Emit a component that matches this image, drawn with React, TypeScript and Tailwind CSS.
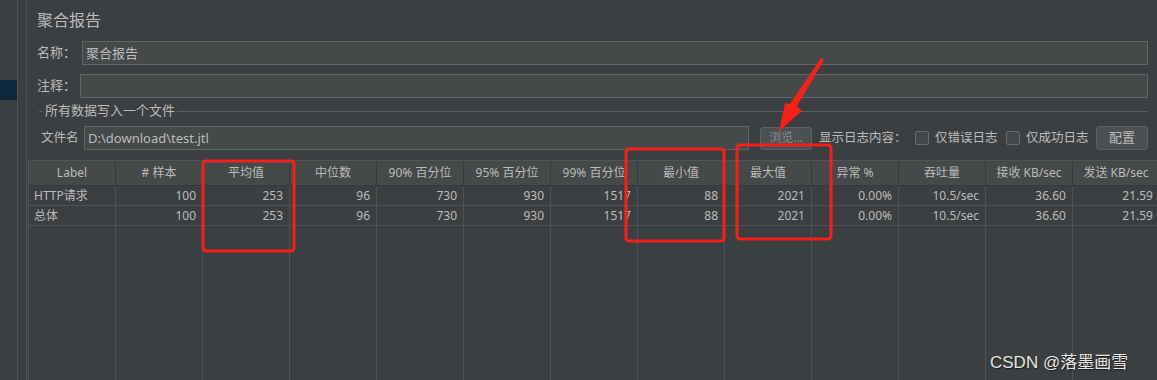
import React from "react";

const FONT = "font-['Noto_Sans','Noto_Sans_CJK_SC',sans-serif]";

const COLUMNS = [
  "Label",
  "# 样本",
  "平均值",
  "中位数",
  "90% 百分位",
  "95% 百分位",
  "99% 百分位",
  "最小值",
  "最大值",
  "异常 %",
  "吞吐量",
  "接收 KB/sec",
  "发送 KB/sec",
];

const ROWS = [
  ["HTTP请求", "100", "253", "96", "730", "930", "1517", "88", "2021", "0.00%", "10.5/sec", "36.60", "21.59"],
  ["总体", "100", "253", "96", "730", "930", "1517", "88", "2021", "0.00%", "10.5/sec", "36.60", "21.59"],
];

function Checkbox({ label }: { label: string }) {
  return (
    <div className="flex items-center gap-[6px] shrink-0 whitespace-nowrap">
      <div className="w-[14px] h-[14px] rounded-[2px] border border-[#6b6b6b] bg-[#43494a]" />
      <span>{label}</span>
    </div>
  );
}

function Annotations() {
  // red boxes and arrow drawn over the screenshot
  return (
    <svg className="absolute left-0 top-0 pointer-events-none" width="1157" height="380">
      <rect x="203" y="161" width="91" height="90" rx="3" fill="none" stroke="#f52018" strokeWidth="3" />
      <rect x="626" y="149" width="98" height="92" rx="3" fill="none" stroke="#f52018" strokeWidth="3" />
      <rect x="737" y="145" width="94" height="94" rx="3" fill="none" stroke="#f52018" strokeWidth="3" />
      <polygon
        points="821,58 824,60 797,106 802,111 779,131 785,103 790,104"
        fill="#f52018"
      />
    </svg>
  );
}

export default function App() {
  return (
    <div className={`relative w-[1157px] h-[380px] overflow-hidden bg-[#3c3f41] text-[#bbbbbb] ${FONT} flex`}>
      {/* left tree strip */}
      <div className="w-[18px] shrink-0 border-r border-[#505354] flex flex-col">
        <div className="h-[80px]" />
        <div className="h-[20px] bg-[#0d293e]" />
      </div>
      <div className="w-[9px] shrink-0 border-r border-[#505354]" />

      {/* main panel */}
      <div className="flex-1 flex flex-col min-w-0">
        <div className="pl-[10px] pr-[9px]">
          <div className="mt-[8px] h-[24px] text-[16px] leading-[24px]">聚合报告</div>

          <div className="mt-[9px] flex items-center h-[24px] text-[13px]">
            <span className="w-[45px] shrink-0">名称：</span>
            <div className="flex-1 h-[24px] border border-[#646464] bg-[#45494a] pl-[3px] text-[13px] leading-[22px]">
              聚合报告
            </div>
          </div>

          <div className="mt-[9px] flex items-center h-[24px] text-[13px]">
            <span className="w-[43px] shrink-0">注释：</span>
            <div className="flex-1 h-[24px] border border-[#646464] bg-[#45494a]" />
          </div>

          <div className="mt-[6px] flex items-center h-[14px] text-[13px] pl-[2px]">
            <div className="w-[4px] h-px bg-[#5c5f61]" />
            <span className="px-[2px]">所有数据写入一个文件</span>
            <div className="flex-1 h-px bg-[#5c5f61]" />
          </div>

          <div className="mt-[8px] flex items-center h-[24px] text-[12.5px] pl-[4px] whitespace-nowrap">
            <span className="w-[43px] shrink-0">文件名</span>
            <div className="w-[665px] shrink-0 h-[24px] border border-[#646464] bg-[#45494a] pl-[3px] text-[13px] leading-[22px]">
              D:\download\test.jtl
            </div>
            <div className="ml-[11px] shrink-0 w-[52px] h-[23px] rounded-[3px] border border-[#5e6060] bg-[#4c5052] text-[#8c8c8c] text-[12px] flex items-center justify-center">
              浏览...
            </div>
            <span className="ml-[7px] w-[96px] shrink-0">显示日志内容：</span>
            <div className="w-[91px] shrink-0">
              <Checkbox label="仅错误日志" />
            </div>
            <div className="shrink-0">
              <Checkbox label="仅成功日志" />
            </div>
            <div className="ml-auto shrink-0 w-[52px] h-[24px] rounded-[3px] border border-[#5e6060] bg-[#4c5052] text-[13px] flex items-center justify-center">
              配置
            </div>
          </div>
        </div>

        {/* results table */}
        <div className="mt-[10px] ml-px flex-1 flex flex-col text-[12px] border-t border-l border-[#505455]">
          <div className="grid grid-cols-[repeat(13,87px)] h-[25px] bg-[#45494a] border-b border-[#363a3b]">
            {COLUMNS.map((c) => (
              <div key={c} className="border-r border-[#363a3b] flex items-center justify-center whitespace-nowrap">
                {c}
              </div>
            ))}
          </div>
          {ROWS.map((row, i) => (
            <div key={i} className="grid grid-cols-[repeat(13,87px)] h-[20px] border-b border-[#4e5254]">
              {row.map((v, j) => (
                <div
                  key={j}
                  className={`border-r border-[#4e5254] flex items-center whitespace-nowrap ${
                    j === 0 ? "pl-[5px]" : "justify-end pr-[6px]"
                  }`}
                >
                  {v}
                </div>
              ))}
            </div>
          ))}
          <div className="flex-1 grid grid-cols-[repeat(13,87px)]">
            {COLUMNS.map((c) => (
              <div key={c} className="border-r border-[#4e5254]" />
            ))}
          </div>
        </div>
      </div>

      <div className="absolute left-[990px] top-[350px] text-[17px] text-[#e6e6e6] font-['Liberation_Sans','Noto_Sans_CJK_SC',sans-serif] [text-shadow:1px_1px_1px_rgba(0,0,0,0.6)]">
        CSDN @落墨画雪
      </div>

      <Annotations />
    </div>
  );
}
